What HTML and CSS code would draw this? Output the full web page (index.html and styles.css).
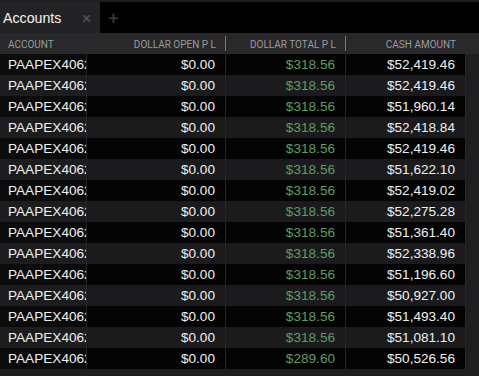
FILE: index.html
```html
<!DOCTYPE html>
<html>
<head>
<meta charset="utf-8">
<link rel="stylesheet" href="styles.css">
</head>
<body>
<div class="tabbar">
  <div class="tab"><span class="tab-title">Accounts</span><span class="tab-close">×</span></div>
  <span class="tab-add">+</span>
</div>
<div class="grid">
  <div class="row head">
    <div class="cell c-acc">Account</div>
    <div class="cell num sep">Dollar Open P L</div>
    <div class="cell num sep">Dollar Total P L</div>
    <div class="cell num">Cash Amount</div>
    <div class="fill"></div>
  </div>
  <div class="row"><div class="cell c-acc">PAAPEX4062</div><div class="cell num">$0.00</div><div class="cell num green">$318.56</div><div class="cell num">$52,419.46</div><div class="fill"></div></div>
  <div class="row"><div class="cell c-acc">PAAPEX4062</div><div class="cell num">$0.00</div><div class="cell num green">$318.56</div><div class="cell num">$52,419.46</div><div class="fill"></div></div>
  <div class="row"><div class="cell c-acc">PAAPEX4062</div><div class="cell num">$0.00</div><div class="cell num green">$318.56</div><div class="cell num">$51,960.14</div><div class="fill"></div></div>
  <div class="row"><div class="cell c-acc">PAAPEX4062</div><div class="cell num">$0.00</div><div class="cell num green">$318.56</div><div class="cell num">$52,418.84</div><div class="fill"></div></div>
  <div class="row"><div class="cell c-acc">PAAPEX4062</div><div class="cell num">$0.00</div><div class="cell num green">$318.56</div><div class="cell num">$52,419.46</div><div class="fill"></div></div>
  <div class="row"><div class="cell c-acc">PAAPEX4062</div><div class="cell num">$0.00</div><div class="cell num green">$318.56</div><div class="cell num">$51,622.10</div><div class="fill"></div></div>
  <div class="row"><div class="cell c-acc">PAAPEX4062</div><div class="cell num">$0.00</div><div class="cell num green">$318.56</div><div class="cell num">$52,419.02</div><div class="fill"></div></div>
  <div class="row"><div class="cell c-acc">PAAPEX4062</div><div class="cell num">$0.00</div><div class="cell num green">$318.56</div><div class="cell num">$52,275.28</div><div class="fill"></div></div>
  <div class="row"><div class="cell c-acc">PAAPEX4062</div><div class="cell num">$0.00</div><div class="cell num green">$318.56</div><div class="cell num">$51,361.40</div><div class="fill"></div></div>
  <div class="row"><div class="cell c-acc">PAAPEX4062</div><div class="cell num">$0.00</div><div class="cell num green">$318.56</div><div class="cell num">$52,338.96</div><div class="fill"></div></div>
  <div class="row"><div class="cell c-acc">PAAPEX4062</div><div class="cell num">$0.00</div><div class="cell num green">$318.56</div><div class="cell num">$51,196.60</div><div class="fill"></div></div>
  <div class="row"><div class="cell c-acc">PAAPEX4062</div><div class="cell num">$0.00</div><div class="cell num green">$318.56</div><div class="cell num">$50,927.00</div><div class="fill"></div></div>
  <div class="row"><div class="cell c-acc">PAAPEX4062</div><div class="cell num">$0.00</div><div class="cell num green">$318.56</div><div class="cell num">$51,493.40</div><div class="fill"></div></div>
  <div class="row"><div class="cell c-acc">PAAPEX4062</div><div class="cell num">$0.00</div><div class="cell num green">$318.56</div><div class="cell num">$51,081.10</div><div class="fill"></div></div>
  <div class="row"><div class="cell c-acc">PAAPEX4062</div><div class="cell num">$0.00</div><div class="cell num green">$289.60</div><div class="cell num">$50,526.56</div><div class="fill"></div></div>
</div>
</body>
</html>
```
FILE: styles.css
```css
html, body {
  margin: 0;
  padding: 0;
  background: #1e1e20;
  font-family: "Liberation Sans", Arial, sans-serif;
  overflow: hidden;
}
.tabbar {
  height: 31px;
  border-top: 2px solid #1d1d1f;
  background: #000;
  display: flex;
  align-items: stretch;
}
.tab {
  width: 100px;
  background: #232326;
  display: flex;
  align-items: center;
  box-sizing: border-box;
  padding-left: 3px;
  padding-top: 1px;
}
.tab-title {
  color: #f2f2f2;
  font-size: 14.2px;
  flex: 1;
}
.tab-close {
  color: #555558;
  font-size: 17px;
  margin-right: 9px;
  font-family: Roboto, sans-serif;
}
.tab-add {
  color: #3c3c3e;
  font-size: 19px;
  margin-left: 8px;
  display: flex;
  align-items: center;
  padding-top: 2px;
  font-family: Roboto, sans-serif;
}
.grid {
  display: flex;
  flex-direction: column;
}
.row {
  display: grid;
  grid-template-columns: 87px 139px 120px 120px 1fr;
  height: 21px;
  background: #040404;
}
.row:nth-child(odd) {
  background: #1b1b1d;
}
.row .c-acc {
  background: #0b0b0c;
}
.row:nth-child(odd) .c-acc {
  background: #1d1d1f;
}
.row.head {
  background: #29292c;
}
.row.head .c-acc {
  background: transparent;
}
.cell {
  display: flex;
  align-items: center;
  padding: 0 10px 0 8px;
  font-size: 13.6px;
  color: #f0f0f0;
  white-space: nowrap;
  overflow: hidden;
  border-right: 1px solid #262628;
  min-width: 0;
}
.cell.c-acc {
  padding-right: 0;
  text-overflow: clip;
}
.cell.num {
  justify-content: flex-end;
}
.green {
  color: #5e9c60;
}
.fill {
  background: #1e1e20;
}
.head .cell {
  font-family: Roboto, sans-serif;
  font-size: 10px;
  color: #9a9a9c;
  text-transform: uppercase;
  border-right: none;
  position: relative;
  padding-top: 1px;
}
.head .sep::after {
  content: "";
  position: absolute;
  right: 0;
  top: 3px;
  bottom: 3px;
  width: 1px;
  background: #77777a;
}
.head .fill {
  background: #29292c;
}
```
